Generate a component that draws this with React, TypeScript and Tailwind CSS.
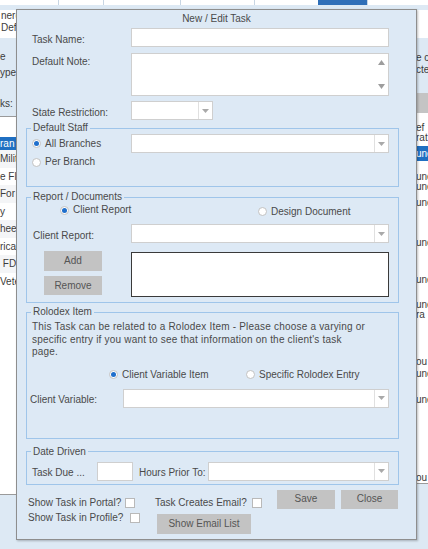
import React from "react";

function Arrow() {
  return (
    <svg width="7" height="4" viewBox="0 0 7 4">
      <path d="M0 0h7L3.5 4z" fill="#a9a9a9" />
    </svg>
  );
}

function Select({ className }: { className: string }) {
  return (
    <div className={`flex h-[19px] bg-white border border-[#cfcfcf] ${className}`}>
      <div className="flex-1" />
      <div className="w-[14px] border-l border-[#e0e0e0] flex items-center justify-center">
        <Arrow />
      </div>
    </div>
  );
}

function Radio({ checked, label, className = "" }: { checked?: boolean; label: string; className?: string }) {
  return (
    <div className={`flex items-center gap-[4px] ${className}`}>
      <span className="w-[9px] h-[9px] rounded-full bg-white border border-[#c2c2c2] flex items-center justify-center">
        {checked && <span className="w-[5px] h-[5px] rounded-full bg-[#1f6fcc]" />}
      </span>
      <span>{label}</span>
    </div>
  );
}

function Check() {
  return <span className="w-[10px] h-[10px] bg-white border border-[#b9b9b9]" />;
}

function Button({ label, className }: { label: string; className: string }) {
  return (
    <div className={`bg-[#c3c3c3] text-[#555] flex items-center justify-center ${className}`}>
      {label}
    </div>
  );
}

function Group({ title, className, children }: { title: string; className: string; children: React.ReactNode }) {
  return (
    <fieldset className={`ml-[9px] w-[373px] border border-[#9fc5ea] ${className}`}>
      <legend className="ml-[4px] px-[2px] leading-[12px]">{title}</legend>
      {children}
    </fieldset>
  );
}

const leftRows = ["Milit", "e Flo", "For", "y", "hee", "rica", " FD", "Vete"];

const rightRows: { mt: string; text: string }[] = [
  { mt: "mt-[11px]", text: "une" },
  { mt: "mt-[0px]", text: "une" },
  { mt: "mt-[6px]", text: "une" },
  { mt: "mt-[30px]", text: "une" },
  { mt: "mt-[27px]", text: "une" },
  { mt: "mt-[15px]", text: "une" },
  { mt: "mt-[0px]", text: "ra" },
  { mt: "mt-[37px]", text: "ou" },
  { mt: "mt-[2px]", text: "une" },
  { mt: "mt-[16px]", text: "une" },
  { mt: "mt-[68px]", text: "ou" },
];

function Background() {
  return (
    <div className="flex flex-col">
      <div className="flex h-[5px]">
        <div className="w-[58px] bg-white" />
        <div className="w-[45px] bg-white border-l border-[#c8d6e4]" />
        <div className="w-[77px] bg-white border-l border-[#c8d6e4]" />
        <div className="w-[74px] bg-white border-l border-[#c8d6e4]" />
        <div className="w-[64px] bg-white border-l border-[#c8d6e4]" />
        <div className="w-[49px] bg-[#2f6fb8]" />
        <div className="flex-1 bg-white border-l border-[#c8d6e4]" />
      </div>
      <div className="h-[5px]" />
      <div className="grid grid-cols-[398px_30px] text-[#3c3c3c]">
        <div className="flex flex-col">
          <div className="h-[28px] bg-white leading-[12px] pl-[1px]">
            <div>nerc</div>
            <div>Def</div>
          </div>
          <div className="mt-[13px] leading-[12px]">e</div>
          <div className="mt-[4px] leading-[12px]">ype</div>
          <div className="mt-[19px] leading-[12px]">ks:</div>
          <div className="mt-[6px] h-[379px] bg-white border-t border-b border-[#9a9a9a] flex flex-col">
            <div className="h-[20px]" />
            <div className="h-[13px] bg-[#1f6fc2] text-white leading-[13px]">ran</div>
            {leftRows.map((r, i) => (
              <div
                key={i}
                className={`h-[17.5px] leading-[17.5px] whitespace-pre ${i % 2 === 0 ? "bg-[#f4f5f7]" : "bg-white"}`}
              >
                {r}
              </div>
            ))}
          </div>
        </div>
        <div className="flex flex-col whitespace-nowrap">
          <div className="h-[28px] bg-white" />
          <div className="pl-[18px] mt-[14px] leading-[12px]">e c</div>
          <div className="pl-[18px] leading-[12px]">cte</div>
          <div className="mt-[17px] h-[20px] bg-[#c4c4c4]" />
          <div className="h-[371px] bg-white border-b border-[#9a9a9a] flex flex-col pl-[18px]">
            <div className="pt-[10px] leading-[10px]">
              <div>ef</div>
              <div>rat</div>
            </div>
            <div className="mt-[3px] h-[15px] -ml-[18px] pl-[18px] bg-[#1f6fc2] text-white leading-[15px]">une</div>
            {rightRows.map((r, i) => (
              <div key={i} className={`${r.mt} leading-[10px]`}>
                {r.text}
              </div>
            ))}
          </div>
        </div>
      </div>
    </div>
  );
}

function Dialog() {
  return (
    <div className="absolute left-[16px] top-[9px] w-[401px] h-[531px] bg-[#dde9f5] border border-[#8e8e8e] shadow-[1px_1px_2px_rgba(0,0,0,0.25)] flex flex-col text-[#4a4a4a]">
      <div className="h-[18px] leading-[18px] text-center">New / Edit Task</div>

      <div className="flex items-center pl-[15px]">
        <div className="w-[99px] pt-[4px]">Task Name:</div>
        <div className="w-[258px] h-[19px] bg-white border border-[#cfcfcf]" />
      </div>

      <div className="flex items-start pl-[15px] mt-[6px]">
        <div className="w-[99px] pt-[3px]">Default Note:</div>
        <div className="w-[258px] h-[43px] bg-white border border-[#cfcfcf] flex justify-end">
          <div className="w-[14px] flex flex-col items-center justify-between py-[6px]">
            <svg width="7" height="5" viewBox="0 0 7 5">
              <path d="M0 5h7L3.5 0z" fill="#9d9d9d" />
            </svg>
            <svg width="7" height="5" viewBox="0 0 7 5">
              <path d="M0 0h7L3.5 5z" fill="#9d9d9d" />
            </svg>
          </div>
        </div>
      </div>

      <div className="flex items-center pl-[15px] mt-[5px]">
        <div className="w-[99px] pt-[4px]">State Restriction:</div>
        <Select className="w-[82px]" />
      </div>

      <Group title="Default Staff" className="mt-[2px] pb-[18px]">
        <div className="flex items-center h-[19px]">
          <div className="w-[104px] pl-[5px]">
            <Radio checked label="All Branches" />
          </div>
          <Select className="w-[258px]" />
        </div>
        <div className="mt-[3px] h-[12px] pl-[5px] flex items-center">
          <Radio label="Per Branch" />
        </div>
      </Group>

      <Group title="Report / Documents" className="mt-[4px] pb-[5px]">
        <div className="mt-[1px] h-[12px] flex items-center pl-[33px]">
          <Radio checked label="Client Report" className="w-[198px]" />
          <Radio label="Design Document" className="mt-[3px]" />
        </div>
        <div className="mt-[8px] flex items-center">
          <div className="w-[104px] pl-[6px] pt-[4px]">Client Report:</div>
          <Select className="w-[258px]" />
        </div>
        <div className="mt-[8px] flex items-start">
          <div className="ml-[17px] w-[58px] flex flex-col">
            <Button label="Add" className="h-[20px]" />
            <Button label="Remove" className="mt-[5px] h-[19px]" />
          </div>
          <div className="ml-[29px] mt-[1px] w-[258px] h-[45px] bg-white border border-[#3a3a3a]" />
        </div>
      </Group>

      <Group title="Rolodex Item" className="mt-[3px] pb-[30px]">
        <div className="mt-[3px] pl-[5px] leading-[12.5px] tracking-[0.2px]">
          This Task can be related to a Rolodex Item - Please choose a varying or
          <br />
          specific entry if you want to see that information on the client's task
          <br />
          page.
        </div>
        <div className="mt-[10px] h-[12px] flex items-center pl-[82px]">
          <Radio checked label="Client Variable Item" className="w-[137px]" />
          <Radio label="Specific Rolodex Entry" />
        </div>
        <div className="mt-[8px] flex items-center">
          <div className="w-[96px] pl-[3px] pt-[4px]">Client Variable:</div>
          <Select className="w-[266px]" />
        </div>
      </Group>

      <Group title="Date Driven" className="mt-[7px] pb-[3px]">
        <div className="mt-[4px] flex items-center">
          <div className="w-[70px] pl-[5px] pt-[4px]">Task Due ...</div>
          <div className="w-[36px] h-[19px] bg-white border border-[#cfcfcf]" />
          <div className="ml-[6px] w-[69px] pt-[4px]">Hours Prior To:</div>
          <Select className="w-[181px]" />
        </div>
      </Group>

      <div className="mt-[5px] pl-[11px] flex items-start">
        <div className="w-[127px] mt-[8px] h-[10px] flex items-center">
          <div className="w-[97px]">Show Task in Portal?</div>
          <Check />
        </div>
        <div className="w-[122px] mt-[8px] h-[10px] flex items-center">
          <div className="w-[97px]">Task Creates Email?</div>
          <Check />
        </div>
        <Button label="Save" className="w-[58px] h-[19px]" />
        <Button label="Close" className="ml-[6px] w-[57px] h-[19px]" />
      </div>

      <div className="mt-[4px] pl-[11px] flex items-start">
        <div className="w-[129px] h-[10px] flex items-center">
          <div className="w-[102px]">Show Task in Profile?</div>
          <Check />
        </div>
        <Button label="Show Email List" className="mt-[1px] w-[94px] h-[20px]" />
      </div>
    </div>
  );
}

export default function App() {
  return (
    <div className="relative w-[428px] h-[549px] overflow-hidden bg-[#dde9f4] font-['Liberation_Sans',Arial,sans-serif] text-[10px] leading-[12px]">
      <Background />
      <Dialog />
    </div>
  );
}
